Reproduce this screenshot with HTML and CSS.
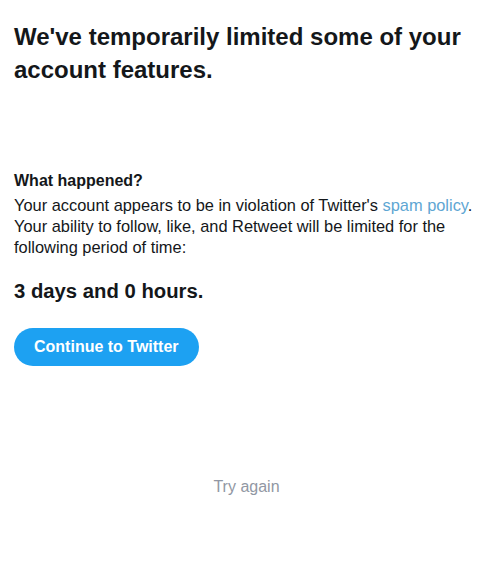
FILE: index.html
```html
<!DOCTYPE html>
<html>
<head>
<meta charset="utf-8">
<link rel="stylesheet" href="styles.css">
</head>
<body>
<main class="page">
  <h1 class="title">We've temporarily limited some of your account features.</h1>
  <section class="details">
    <h2 class="subtitle">What happened?</h2>
    <p class="body">Your account appears to be in violation of Twitter's <a class="link" href="#">spam policy</a>. Your ability to follow, like, and Retweet will be limited for the following period of time:</p>
    <p class="period">3 days and 0 hours.</p>
    <div class="actions"><button class="btn">Continue to Twitter</button></div>
  </section>
  <div class="retry">Try again</div>
</main>
</body>
</html>
```
FILE: styles.css
```css
html, body {
  margin: 0;
  padding: 0;
  background: #ffffff;
}
body {
  font-family: "Liberation Sans", Arial, sans-serif;
  color: #14171a;
}
.page {
  padding: 20px 14px 0 14px;
}
.title {
  margin: 0;
  font-size: 24px;
  line-height: 33px;
  font-weight: bold;
  color: #14171a;
}
.details {
  margin-top: 85px;
}
.subtitle {
  margin: 0;
  font-size: 16px;
  line-height: 20px;
  font-weight: bold;
}
.body {
  margin: 4px 0 0 0;
  font-size: 16.4px;
  line-height: 21px;
  color: #14171a;
}
.link {
  color: #5ea6d3;
  text-decoration: none;
}
.period {
  margin: 20px 0 0 0;
  font-size: 20.3px;
  line-height: 26px;
  font-weight: bold;
}
.actions {
  margin-top: 24px;
}
.btn {
  border: none;
  background: #1da1f2;
  color: #ffffff;
  font-family: "Liberation Sans", Arial, sans-serif;
  font-size: 16px;
  font-weight: bold;
  height: 38px;
  padding: 0 20px;
  border-radius: 19px;
}
.retry {
  margin-top: 112px;
  text-align: center;
  font-size: 16px;
  color: #9197a3;
}
```
